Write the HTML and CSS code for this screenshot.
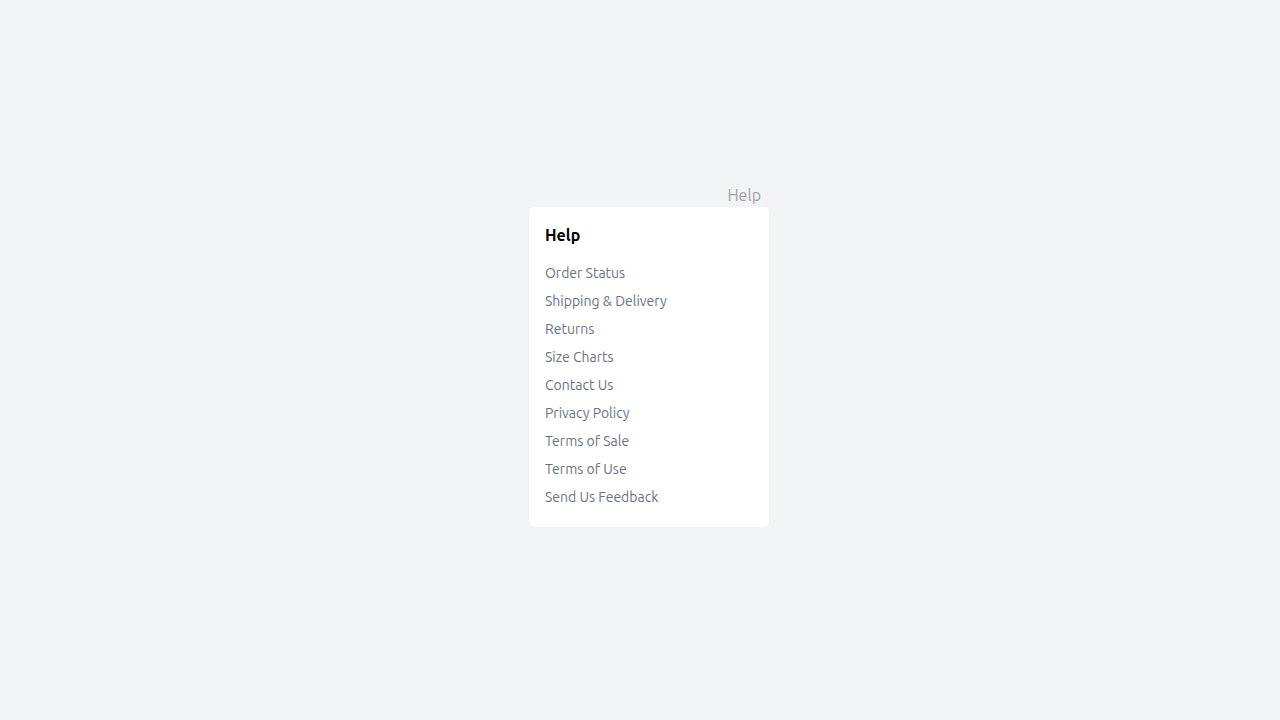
FILE: index.html
```html
<!DOCTYPE html>
<html lang="en">
<head>
  <meta charset="UTF-8">
  <title>Help</title>
  <link rel="stylesheet" href="styles.css">
</head>
<body>
  <div class="menu">
    <div class="trigger">Help</div>
    <div class="panel">
      <h2>Help</h2>
      <ul class="links">
        <li><a href="#">Order Status</a></li>
        <li><a href="#">Shipping &amp; Delivery</a></li>
        <li><a href="#">Returns</a></li>
        <li><a href="#">Size Charts</a></li>
        <li><a href="#">Contact Us</a></li>
        <li><a href="#">Privacy Policy</a></li>
        <li><a href="#">Terms of Sale</a></li>
        <li><a href="#">Terms of Use</a></li>
        <li><a href="#">Send Us Feedback</a></li>
      </ul>
    </div>
  </div>
</body>
</html>
```
FILE: styles.css
```css
body {
  font-family: Ubuntu, "Fira Sans", sans-serif;
  background-color: #f3f4f6;
  margin: 0;
  padding: 183px 0 0 529px;
}

.menu {
  width: 240px;
}

.trigger {
  text-align: right;
  padding-right: 8px;
  font-size: 16px;
  line-height: 24px;
  color: #9ca3af;
}

.panel {
  background-color: #fff;
  border-radius: 6px;
  padding: 16px 16px 20px;
}

.panel h2 {
  margin: 0 0 16px;
  font-size: 16px;
  line-height: 24px;
  font-weight: 600;
  color: #000;
}

.links {
  list-style: none;
  margin: 0;
  padding: 0;
  display: flex;
  flex-direction: column;
  gap: 8px;
}

.links a {
  display: block;
  font-size: 14px;
  line-height: 20px;
  color: #6b7280;
  text-decoration: none;
}
```
